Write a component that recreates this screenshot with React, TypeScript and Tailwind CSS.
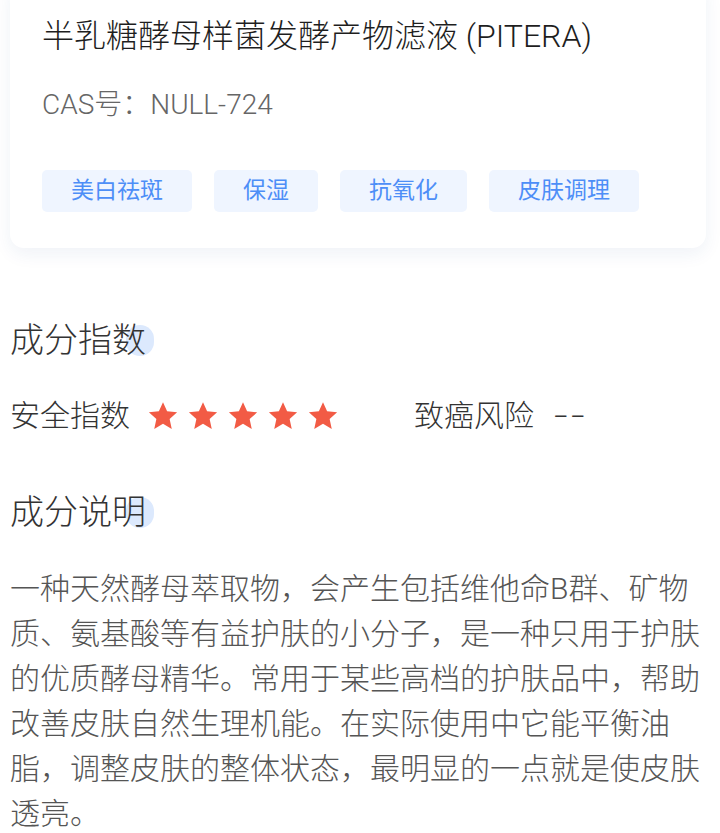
import React from "react";

const FONT = 'Roboto, "Noto Sans CJK SC", "Noto Sans", sans-serif';

function Star() {
  return (
    <svg width="32" height="32" viewBox="0 0 24 24" className="block">
      <path
        d="M12 1.6l3.09 6.9 7.5.78-5.62 5.04 1.6 7.38L12 17.9l-6.57 3.8 1.6-7.38L1.41 9.28l7.5-.78z"
        fill="#f25b45"
      />
    </svg>
  );
}

function Heading({ text }: { text: string }) {
  return (
    <div className="relative inline-block text-[34px] font-light leading-[48px] text-[#333333]">
      <span className="absolute right-[-8px] top-[9px] h-[31px] w-[28px] rounded-full bg-[#dce9fd]" />
      <span className="relative">{text}</span>
    </div>
  );
}

export default function App() {
  const tags = ["美白祛斑", "保湿", "抗氧化", "皮肤调理"];
  return (
    <div className="min-h-[833px] overflow-hidden bg-white font-light" style={{ fontFamily: FONT }}>
      <div className="-mt-5 ml-[10px] w-[696px] rounded-[14px] bg-white pl-8 pr-4 pt-[34px] pb-9 shadow-[0_6px_18px_rgba(30,70,140,0.07)]">
        <div className="text-[32px] leading-[44px] text-[#1e1e1e]">半乳糖酵母样菌发酵产物滤液 (PITERA)</div>
        <div className="mt-[27px] text-[28px] leading-[40px] text-[#666666]">CAS号：NULL-724</div>
        <div className="mt-[45px] flex gap-[22px]">
          {tags.map((t) => (
            <div
              key={t}
              className="h-[42px] rounded-[5px] bg-[#eff5ff] px-[29px] text-[23px] font-normal leading-[42px] text-[#4d8ef7]"
            >
              {t}
            </div>
          ))}
        </div>
      </div>

      <div className="px-[10px]">
        <div className="mt-[68px]">
          <Heading text="成分指数" />
        </div>
        <div className="mt-[30px] flex h-[44px] items-center text-[30px] leading-[44px] text-[#333333]">
          <div className="flex w-[404px] items-center">
            <span>安全指数</span>
            <div className="ml-[17px] flex gap-[8px]">
              <Star />
              <Star />
              <Star />
              <Star />
              <Star />
            </div>
          </div>
          <span>致癌风险</span>
          <span className="ml-[20px] inline-block origin-left scale-x-[1.6] tracking-[2px]">--</span>
        </div>
        <div className="mt-[50px]">
          <Heading text="成分说明" />
        </div>
        <p className="mt-[30px] text-[30px] leading-[45px] text-[#555555]">
          一种天然酵母萃取物，会产生包括维他命B群、矿物质、氨基酸等有益护肤的小分子，是一种只用于护肤的优质酵母精华。常用于某些高档的护肤品中，帮助改善皮肤自然生理机能。在实际使用中它能平衡油脂，调整皮肤的整体状态，最明显的一点就是使皮肤透亮。
        </p>
      </div>
    </div>
  );
}
